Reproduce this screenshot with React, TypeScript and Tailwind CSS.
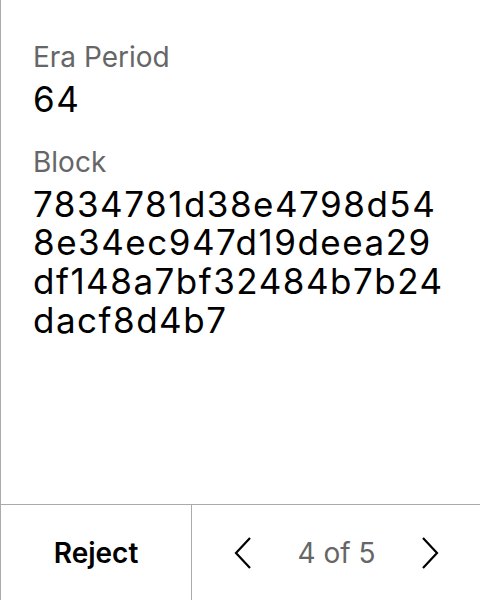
const blockHash =
  "7834781d38e4798d548e34ec947d19deea29df148a7bf32484b7b24dacf8d4b7";

function Chevron({ dir }: { dir: "left" | "right" }) {
  const points = dir === "left" ? "17,2 3,17 17,32" : "3,2 17,17 3,32";
  return (
    <svg width="20" height="34" viewBox="0 0 20 34" fill="none">
      <polyline points={points} stroke="black" strokeWidth="2.2" />
    </svg>
  );
}

function Field({ label, value, className }: { label: string; value: string; className?: string }) {
  return (
    <div className={"flex flex-col " + (className ?? "")}>
      <span className="text-[28px] leading-[34px] text-[#666666]">{label}</span>
      <span className="mt-[6px] text-[35px] leading-[38.7px] tracking-[1.5px] text-black break-all">
        {value}
      </span>
    </div>
  );
}

export default function App() {
  return (
    <div
      className="flex h-[600px] w-[480px] flex-col border-l border-[#aaaaaa] bg-white"
      style={{ fontFamily: "Inter, 'Noto Sans', sans-serif" }}
    >
      <div className="flex flex-1 flex-col pl-8 pr-[33px] pt-10">
        <Field label="Era Period" value="64" />
        <Field label="Block" value={blockHash} className="mt-[26px]" />
      </div>

      {/* footer: reject + pager */}
      <div className="grid h-24 grid-cols-[191px_1fr] border-t border-[#aaaaaa]">
        <button className="flex items-center justify-center border-r border-[#aaaaaa] text-[28px] font-semibold text-black">
          Reject
        </button>
        <div className="flex items-center justify-between pl-[41px] pr-[40px]">
          <Chevron dir="left" />
          <span className="text-[28px] text-[#666666]">4 of 5</span>
          <Chevron dir="right" />
        </div>
      </div>
    </div>
  );
}
